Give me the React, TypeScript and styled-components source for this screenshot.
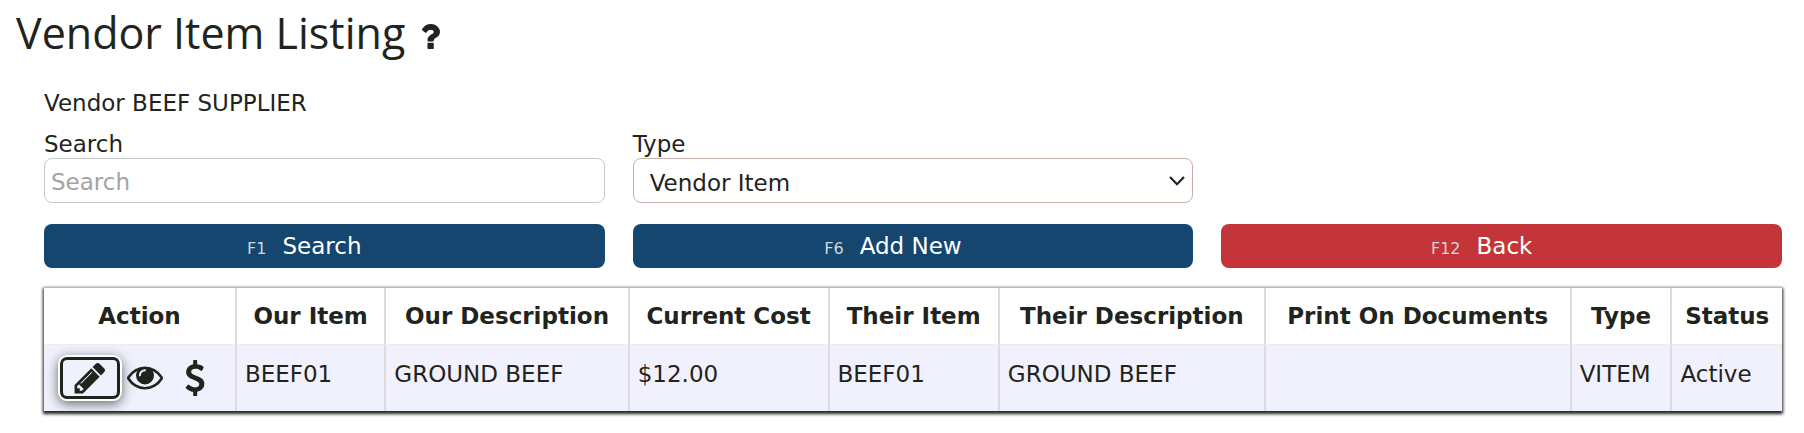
import React from "react";
import styled, { createGlobalStyle } from "styled-components";

const ink = "#1f241d";

const GlobalStyle = createGlobalStyle`
  *, *::before, *::after { box-sizing: border-box; }
  body {
    margin: 0;
    background: #fff;
    color: ${ink};
    font: 23px/28px Verdana, "DejaVu Sans", sans-serif;
  }
`;

const Page = styled.main`
  padding: 0 22px 20px 16px;
`;

const Title = styled.h1`
  display: flex;
  align-items: center;
  gap: 15px;
  margin: 0;
  font: 400 43px/66px "Segoe UI", "Open Sans", sans-serif;
`;

const HelpLink = styled.a`
  display: flex;
  padding-top: 7px;
  color: inherit;
`;

const Content = styled.div`
  padding: 23px 0 0 28px;
`;

const VendorName = styled.p`
  margin: 0 0 14px;
`;

const FieldGrid = styled.div`
  display: grid;
  grid-template-columns: repeat(3, 1fr);
  column-gap: 28px;
`;

const ButtonGrid = styled(FieldGrid)`
  margin: 21px 0 19px;
`;

const Field = styled.div`
  display: flex;
  flex-direction: column;
  > label { line-height: 27px; }
`;

const TextInput = styled.input`
  width: 100%;
  height: 45px;
  padding: 2px 6px 0;
  border: 1px solid #c2c9c9;
  border-radius: 8px;
  background: #fff;
  color: ${ink};
  font: inherit;
  &::placeholder { color: #a3a3a3; opacity: 1; }
`;

const SelectBox = styled.div`
  display: grid;
  align-items: center;
  > * { grid-area: 1 / 1; }
  > svg { justify-self: end; margin-right: 8px; pointer-events: none; }
`;

const Select = styled.select`
  appearance: none;
  width: 100%;
  height: 45px;
  padding: 4px 40px 0 16px;
  border: 1px solid #c8b0a8;
  border-radius: 8px;
  background: #fff;
  color: ${ink};
  font: inherit;
`;

const ActionButton = styled.button<{ $tone: string }>`
  display: flex;
  align-items: baseline;
  justify-content: center;
  gap: 16px;
  height: 44px;
  padding: 8px 40px 0 0;
  border: 0;
  border-radius: 8px;
  background: ${(p) => p.$tone};
  color: #fff;
  font: inherit;
`;

const KeyHint = styled.span`
  color: #d3d6d8;
  font-size: 16px;
`;

const Table = styled.table`
  width: 100%;
  table-layout: fixed;
  border-collapse: separate;
  border-spacing: 0;
  border-top: 1px solid #c4b2b2;
  box-shadow: 0 2px 3px 1px ${ink};
`;

const Column = styled.col<{ $share: number }>`
  width: ${(p) => p.$share}%;
`;

const HeadCell = styled.th`
  height: 56px;
  padding: 0;
  border-right: 2px solid #dcdcdc;
  background: #fff;
  white-space: nowrap;
  &:last-child { border-right: 0; }
`;

const Cell = styled.td`
  height: 67px;
  padding: 0 8px 9px;
  border-top: 1px solid #ececee;
  border-right: 2px solid #dcdcdc;
  background: #f1f1fd;
  white-space: nowrap;
  &:last-child { border-right: 0; }
`;

const ActionCell = styled(Cell)`
  padding: 0 0 0 19px;
`;

const Actions = styled.div`
  display: flex;
  align-items: center;
`;

const IconButton = styled.button<{ $focused?: boolean; $width: number }>`
  display: flex;
  align-items: center;
  justify-content: center;
  width: ${(p) => p.$width}px;
  height: 36px;
  padding: 0;
  border: 0;
  border-radius: 4px;
  background: transparent;
  color: ${ink};
  ${(p) =>
    p.$focused &&
    `box-shadow: 0 0 0 3px ${ink}, 0 0 0 5px #fff, 0 3px 12px 5px rgba(31, 36, 29, 0.65);`}
`;

const icons = {
  pencil:
    "M491 1536l91-91-235-235-91 91v107h128v128h107zm523-928q0-22-22-22-10 0-17 7l-542 542q-7 7-7 17 0 22 22 22 10 0 17-7l542-542q7-7 7-17zm-54-192l416 416-832 832h-416v-416zm683 96q0 53-37 90l-166 166-416-416 166-165q36-38 90-38 53 0 91 38l235 234q37 39 37 91z",
  eye: "M1664 960q-152-236-381-353 61 104 61 225 0 185-131.5 316.5t-316.5 131.5-316.5-131.5-131.5-316.5q0-121 61-225-229 117-381 353 133 205 333.5 326.5t434.5 121.5 434.5-121.5 333.5-326.5zm-720-384q0-20-14-34t-34-14q-125 0-214.5 89.5t-89.5 214.5q0 20 14 34t34 14 34-14 14-34q0-86 61-147t147-61q20 0 34-14t14-34zm848 384q0 34-20 69-140 230-376.5 368.5t-499.5 138.5-499.5-139-376.5-368q-20-35-20-69t20-69q140-229 376.5-368t499.5-139 499.5 139 376.5 368q20 35 20 69z",
  dollar:
    "M1362 1185q0 153-99.5 263.5t-258.5 136.5v175q0 14-9 23t-23 9h-135q-13 0-22.5-9.5t-9.5-22.5v-175q-66-9-127.5-31t-101.5-44.5-74-48-46.5-37.5-17.5-18q-17-21-2-41l103-135q7-10 23-12 15-2 24 9l2 2q113 99 243 125 37 8 74 8 81 0 142.5-43t61.5-122q0-28-15-53t-33.5-42-58.5-37.5-66-32-80-32.5q-39-16-61.5-25t-61.5-26.5-62.5-31-56.5-35.5-53.5-42.5-43.5-49-35.5-58-21-66.5-8.5-78q0-138 98-242t255-134v-180q0-13 9.5-22.5t22.5-9.5h135q14 0 23 9t9 23v176q57 6 110.5 23t87 33.5 63.5 37.5 39 29 15 14q17 18 5 38l-81 146q-8 15-23 16-14 3-27-7-3-3-14.5-12t-39-26.5-58.5-32-74.5-26-85.5-11.5q-95 0-155 43t-60 111q0 26 8.5 48t29.5 41.5 39.5 33 56 31 60.5 27 70 27.5q53 20 81 31.5t76 35 75.5 42.5 62 50 53 63.5 31.5 76.5 13 94z",
  question:
    "M1088 1256v240q0 16-12 28t-28 12h-240q-16 0-28-12t-12-28v-240q0-16 12-28t28-12h240q16 0 28 12t12 28zm316-600q0 54-15.5 101t-35 76.5-55 59.5-57.5 43.5-61 35.5q-41 23-68.5 65t-27.5 67q0 17-12 32.5t-28 15.5h-240q-15 0-25.5-18.5t-10.5-37.5v-45q0-83 65-156.5t143-108.5q59-27 84-56t25-76q0-42-46.5-74t-107.5-32q-65 0-108 29-35 25-107 115-13 16-31 16-12 0-25-8l-164-125q-13-10-15.5-25t5.5-28q160-266 464-266 80 0 161 31t146 83 106 127.5 41 158.5z",
};

function Icon({ name, size, viewBox = "0 0 1792 1792" }: { name: keyof typeof icons; size: [number, number]; viewBox?: string }) {
  return (
    <svg width={size[0]} height={size[1]} viewBox={viewBox} fill="currentColor" aria-hidden="true">
      <path d={icons[name]} />
    </svg>
  );
}

const columns: [string, number][] = [
  ["Action", 11.1],
  ["Our Item", 8.6],
  ["Our Description", 14],
  ["Current Cost", 11.5],
  ["Their Item", 9.8],
  ["Their Description", 15.3],
  ["Print On Documents", 17.6],
  ["Type", 5.8],
  ["Status", 6.3],
];

const rows = [["BEEF01", "GROUND BEEF", "$12.00", "BEEF01", "GROUND BEEF", "", "VITEM", "Active"]];

export default function App() {
  return (
    <>
      <GlobalStyle />
      <Page>
        <Title>
          Vendor Item Listing
          <HelpLink href="#help" aria-label="Help">
            <Icon name="question" size={[20, 27]} viewBox="386 240 1020 1310" />
          </HelpLink>
        </Title>
        <Content>
          <VendorName>Vendor BEEF SUPPLIER</VendorName>
          <FieldGrid>
            <Field>
              <label htmlFor="search">Search</label>
              <TextInput id="search" type="text" placeholder="Search" />
            </Field>
            <Field>
              <label htmlFor="type">Type</label>
              <SelectBox>
                <Select id="type" defaultValue="vitem">
                  <option value="vitem">Vendor Item</option>
                </Select>
                <svg width="16" height="10" viewBox="0 0 16 10" fill="none" stroke={ink} strokeWidth="2.2" aria-hidden="true">
                  <path d="M1 1l7 7.200 7-7.200" />
                </svg>
              </SelectBox>
            </Field>
          </FieldGrid>
          <ButtonGrid>
            <ActionButton type="button" $tone="#14466f">
              <KeyHint>F1</KeyHint>Search
            </ActionButton>
            <ActionButton type="button" $tone="#14466f">
              <KeyHint>F6</KeyHint>Add New
            </ActionButton>
            <ActionButton type="button" $tone="#c4353a">
              <KeyHint>F12</KeyHint>Back
            </ActionButton>
          </ButtonGrid>
          <Table>
            <colgroup>
              {columns.map(([name, share]) => (
                <Column key={name} $share={share} />
              ))}
            </colgroup>
            <thead>
              <tr>
                {columns.map(([name]) => (
                  <HeadCell key={name} scope="col">{name}</HeadCell>
                ))}
              </tr>
            </thead>
            <tbody>
              {rows.map((row, r) => (
                <tr key={r}>
                  <ActionCell>
                    <Actions>
                      <IconButton type="button" aria-label="Edit" $width={54} $focused>
                        <Icon name="pencil" size={[36, 36]} />
                      </IconButton>
                      <IconButton type="button" aria-label="View" $width={56}>
                        <Icon name="eye" size={[36, 36]} viewBox="0 64 1792 1792" />
                      </IconButton>
                      <IconButton type="button" aria-label="Cost" $width={44}>
                        <Icon name="dollar" size={[36, 36]} />
                      </IconButton>
                    </Actions>
                  </ActionCell>
                  {row.map((value, c) => (
                    <Cell key={c}>{value}</Cell>
                  ))}
                </tr>
              ))}
            </tbody>
          </Table>
        </Content>
      </Page>
    </>
  );
}
